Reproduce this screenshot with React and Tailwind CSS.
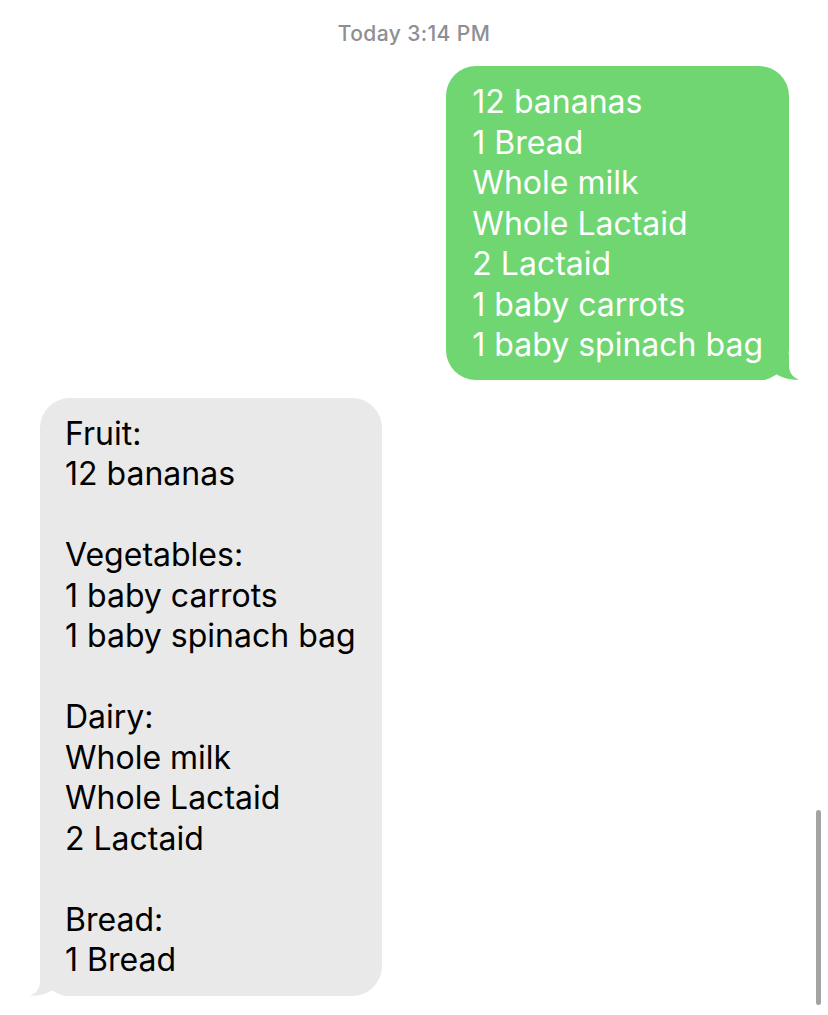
export default function App() {
  const green = ["12 bananas", "1 Bread", "Whole milk", "Whole Lactaid", "2 Lactaid", "1 baby carrots", "1 baby spinach bag"];
  const gray = ["Fruit:", "12 bananas", "", "Vegetables:", "1 baby carrots", "1 baby spinach bag", "", "Dairy:", "Whole milk", "Whole Lactaid", "2 Lactaid", "", "Bread:", "1 Bread"];
  return (
    <div className="relative w-[828px] h-[1015px] bg-white overflow-hidden" style={{ fontFamily: "Inter, 'Noto Sans', sans-serif" }}>
      <div className="pt-[20px] text-center text-[21px] leading-[28px] font-medium tracking-[0.4px] text-[#8e8e93]">Today 3:14 PM</div>
      <div className="flex justify-end pr-[39px] mt-[18px]">
        <div className="relative bg-[#6fd672] text-white rounded-[30px] pl-[26px] pr-[26px] pt-[16px] pb-[14px] text-[32px] leading-[40.5px] tracking-[0px]">
          <svg className="absolute right-[-10px] bottom-0" width="40" height="26" viewBox="0 0 40 26">
            <path d="M30,0 L30,11 C30,18 33,23 40,25.5 C33,26.5 24,24.5 16,19.5 C13,23 9,25.5 4,26 L0,26 L0,0 Z" fill="#6fd672" />
          </svg>
          <div className="relative">
            {green.map((t, i) => <div key={i} className="h-[40.5px] whitespace-nowrap">{t}</div>)}
          </div>
        </div>
      </div>
      <div className="flex justify-start pl-[40px] mt-[18px]">
        <div className="relative bg-[#e9e9e9] text-black rounded-[30px] pl-[25px] pr-[26px] pt-[16px] pb-[15px] text-[32px] leading-[40.5px] tracking-[0px]">
          <svg className="absolute left-[-10px] bottom-0" width="40" height="26" viewBox="0 0 40 26">
            <path d="M10,0 L10,11 C10,18 7,23 0,25.5 C7,26.5 16,24.5 24,19.5 C27,23 31,25.5 36,26 L40,26 L40,0 Z" fill="#e9e9e9" />
          </svg>
          <div className="relative">
            {gray.map((t, i) => <div key={i} className="h-[40.5px] whitespace-nowrap">{t}</div>)}
          </div>
        </div>
      </div>
      <div className="absolute right-[7px] top-[810px] w-[5px] h-[195px] rounded-full bg-[#a3a3a3]" />
    </div>
  );
}
